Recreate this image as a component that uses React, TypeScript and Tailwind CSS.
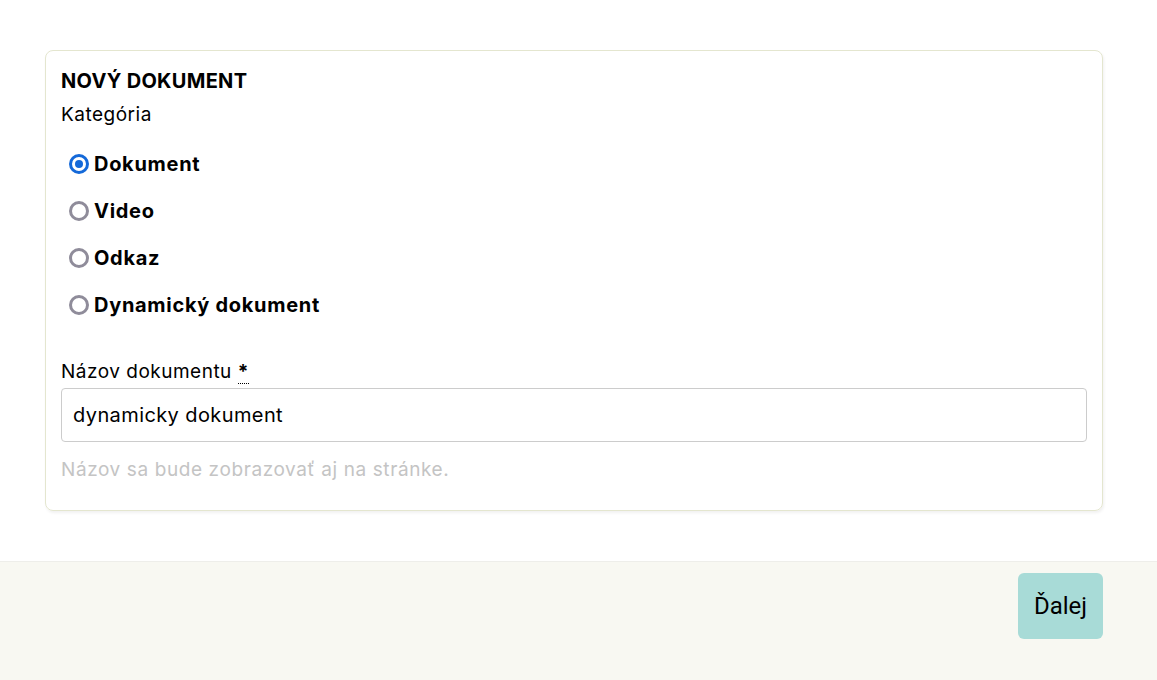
import { useState } from 'react';

const options = ['Dokument', 'Video', 'Odkaz', 'Dynamický dokument'];

export default function App() {
  const [category, setCategory] = useState('Dokument');
  const [name, setName] = useState('dynamicky dokument');

  return (
    <div className="min-h-[680px] flex flex-col bg-white font-['Inter',sans-serif] text-black">
      <div className="pl-[45px] pr-[54px] pt-[50px] pb-[50px] bg-white">
        <div className="rounded-lg border border-[#e4e6cf] shadow-[1px_2px_3px_rgba(0,0,0,0.06)] px-[15px] pt-[17px] pb-[27px]">
          <h2 className="text-[20px] font-bold leading-[26px] tracking-[0.3px]">NOVÝ DOKUMENT</h2>
          <div className="text-[19px] leading-[26px] mt-[8px] tracking-[0.5px]">Kategória</div>
          <div className="mt-[12px] flex flex-col">
            {options.map((opt) => (
              <label key={opt} className="flex items-center h-[47px] pl-2 cursor-pointer">
                <input
                  type="radio"
                  name="category"
                  checked={category === opt}
                  onChange={() => setCategory(opt)}
                  className="sr-only"
                />
                <span
                  className={`w-[20px] h-[20px] rounded-full flex items-center justify-center border-[3px] ${
                    category === opt ? 'border-[#1469d9]' : 'border-[#8f8c9a]'
                  }`}
                >
                  {category === opt && <span className="w-[8px] h-[8px] rounded-full bg-[#1469d9]" />}
                </span>
                <span className="ml-[5px] text-[20px] font-bold tracking-[0.7px]">{opt}</span>
              </label>
            ))}
          </div>
          <div className="mt-[31px] text-[19px] leading-[26px] tracking-[0.5px]">
            Názov dokumentu{' '}
            <abbr title="povinné" className="font-bold no-underline border-b border-dotted border-black">*</abbr>
          </div>
          <input
            value={name}
            onChange={(e) => setName(e.target.value)}
            className="mt-[3px] w-full h-[54px] rounded border border-[#cccccc] px-[11px] text-[20px] tracking-[0.4px] outline-none"
          />
          <div className="mt-[15px] text-[19px] leading-[26px] tracking-[0.6px] text-[#c4c4c4]">Názov sa bude zobrazovať aj na stránke.</div>
        </div>
      </div>
      <div className="flex-1 bg-[#f8f8f2] border-t border-[#eeeeea] flex justify-end items-start pt-[11px] pr-[54px]">
        <button className="w-[85px] h-[66px] rounded-md bg-[#a8dbd7] text-[24px] font-['Roboto',sans-serif]">Ďalej</button>
      </div>
    </div>
  );
}
